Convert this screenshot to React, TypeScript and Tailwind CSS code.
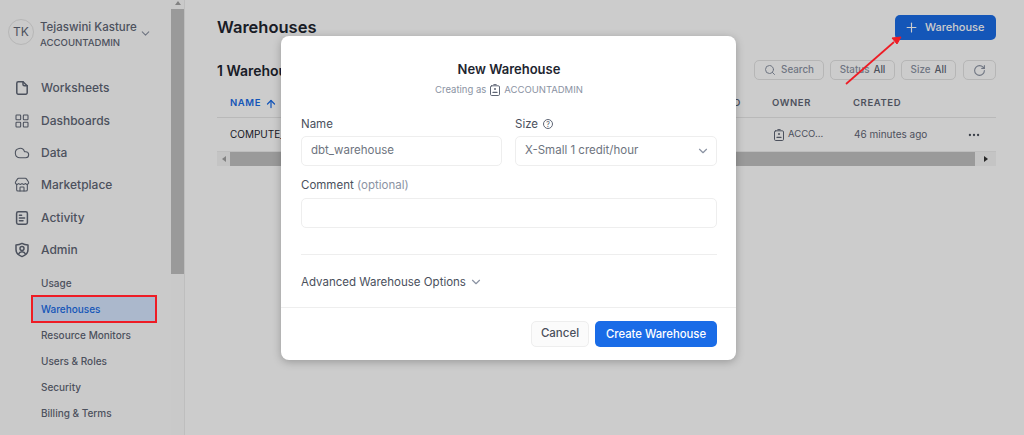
import React from 'react';
import { ArrowUp, ChevronDown, Cloud, LayoutGrid, MoreHorizontal, Plus, RotateCw, Search, Store } from 'lucide-react';

const FileIcon = () => (
  <svg width="16" height="16" viewBox="0 0 16 16" fill="none" stroke="currentColor" strokeWidth="1.5" strokeLinejoin="round" strokeLinecap="round">
    <path d="M9 1.8H4.2A1.4 1.4 0 0 0 2.8 3.2v9.6a1.4 1.4 0 0 0 1.4 1.4h7.6a1.4 1.4 0 0 0 1.4-1.4V5.8Z" />
    <path d="M9 1.8v2.6a1.4 1.4 0 0 0 1.4 1.4h2.8" />
  </svg>
);

const ActivityIcon = () => (
  <svg width="16" height="16" viewBox="0 0 16 16" fill="none" stroke="currentColor" strokeWidth="1.5" strokeLinecap="round">
    <rect x="2.6" y="1.8" width="10.8" height="12.4" rx="1.6" />
    <path d="M5.4 5.2h2.2M5.4 8h5.2M5.4 10.8h3.6" />
  </svg>
);

const AdminIcon = () => (
  <svg width="16" height="16" viewBox="0 0 16 16" fill="none" stroke="currentColor" strokeWidth="1.5" strokeLinejoin="round">
    <path d="M8 1.4c2 1.2 3.9 1.6 6 1.7v4.4c0 3.4-2.4 5.8-6 7.1-3.6-1.3-6-3.7-6-7.1V3.1c2.1-.1 4-.5 6-1.7Z" />
    <circle cx="8" cy="6.6" r="2" />
    <path d="M4.6 12c.6-1.5 1.9-2.3 3.4-2.3s2.8.8 3.4 2.3" />
  </svg>
);

const RoleIcon = ({ size = 12 }: { size?: number }) => (
  <svg width={size} height={size} viewBox="0 0 12 12" fill="none" stroke="currentColor" strokeWidth="1" strokeLinecap="round">
    <rect x="1.5" y="1.8" width="9" height="9.7" rx="1.2" />
    <path d="M4.8 .6h2.4" />
    <circle cx="6" cy="5" r="1" fill="currentColor" stroke="none" />
    <path d="M4 8.4h4" strokeWidth="1.2" />
  </svg>
);

const navItems = [
  { label: 'Worksheets', icon: <FileIcon /> },
  { label: 'Dashboards', icon: <LayoutGrid size={16} strokeWidth={1.6} /> },
  { label: 'Data', icon: <Cloud size={16} strokeWidth={1.6} /> },
  { label: 'Marketplace', icon: <Store size={16} strokeWidth={1.6} /> },
  { label: 'Activity', icon: <ActivityIcon /> },
  { label: 'Admin', icon: <AdminIcon /> },
];

const subItems = ['Usage', 'Warehouses', 'Resource Monitors', 'Users & Roles', 'Security', 'Billing & Terms'];

const Sidebar = () => (
  <aside className="flex w-[185px] shrink-0 border-r border-[#eeeeee] bg-[#fdfdfd]">
    <div className="w-[171px] shrink-0">
      <div className="flex h-[72px] items-start pl-2 pt-[19px]">
        <div className="flex h-[26px] w-[26px] shrink-0 items-center justify-center rounded-full border border-[#e4e4e4] text-[12px] text-[#5f6675]">
          TK
        </div>
        <div className="ml-[6px] flex w-[101px] flex-col">
          <span className="whitespace-nowrap text-[11.5px] font-medium leading-[16px] text-[#5f6675]">Tejaswini Kasture</span>
          <span className="whitespace-nowrap text-[9.6px] font-medium leading-[15px] text-[#5f6675]">ACCOUNTADMIN</span>
        </div>
        <ChevronDown size={13} className="mt-[8px] -ml-[2px] text-[#8b93a3]" />
      </div>
      <nav className="flex flex-col">
        {navItems.map(item => (
          <div key={item.label} className="flex h-[32.4px] items-center pl-[14px] text-[#5f6675]">
            <span className="flex w-[27px] shrink-0">{item.icon}</span>
            <span className="text-[12px] font-medium">{item.label}</span>
          </div>
        ))}
      </nav>
      <div className="mt-[4px] flex flex-col pl-[33px] pr-[16px]">
        {subItems.map(label => (
          <div
            key={label}
            className={`flex h-[26px] items-center whitespace-nowrap pl-[8px] text-[10px] font-medium ${
              label === 'Warehouses' ? 'bg-[#d6e6ff] text-[#1a6ce7]' : 'text-[#5f6675]'
            }`}
          >
            {label}
          </div>
        ))}
      </div>
    </div>
    <div className="flex w-[13px] shrink-0 flex-col bg-[#fcfcfc]">
      <div className="flex h-[9px] items-start justify-center pt-[1px]">
        <div className="h-0 w-0 border-x-[3px] border-b-[4px] border-x-transparent border-b-[#a3a3a3]" />
      </div>
      <div className="h-[265px] bg-[#c1c1c1]" />
    </div>
  </aside>
);

const ToolButton = ({ children, className = '' }: { children: React.ReactNode; className?: string }) => (
  <div className={`flex h-[20px] items-center justify-center gap-[4px] rounded-[5px] border border-[#e4e4e4] text-[9.8px] font-medium text-[#8b93a3] ${className}`}>
    {children}
  </div>
);

const Main = () => (
  <main className="flex min-w-0 flex-1 flex-col pl-[32px] pr-[28px] pt-[15px]">
    <div className="flex h-[25px] items-center justify-between">
      <h1 className="text-[16.5px] font-semibold text-[#1e252f]">Warehouses</h1>
      <div className="flex h-[25px] w-[101px] items-center gap-[6px] rounded-[5px] bg-[#1a6ce7] pl-[9px] text-[11px] font-medium text-white">
        <Plus size={15} strokeWidth={1.8} />
        Warehouse
      </div>
    </div>
    <div className="mt-[20px] flex h-[20px] items-center">
      <span className="text-[14px] font-semibold text-[#1e252f]">1 Warehouse</span>
      <div className="ml-auto flex gap-[6px]">
        <ToolButton className="w-[70px] gap-[5px] text-[#5f6675]">
          <Search size={12} />
          Search
        </ToolButton>
        <ToolButton className="w-[65px]">
          Status <span className="text-[#5f6675]">All</span>
        </ToolButton>
        <ToolButton className="w-[55px]">
          Size <span className="text-[#5f6675]">All</span>
        </ToolButton>
        <ToolButton className="ml-[1px] w-[33px] text-[#5f6675]">
          <RotateCw size={13} />
        </ToolButton>
      </div>
    </div>
    <div className="mt-[12px] grid h-[26px] grid-cols-[419px_92px_81px_1fr] items-center border-b border-[#e8e8e8] pb-[2px] pl-[13px] text-[9.5px] font-semibold tracking-[0.6px] text-[#5f6675]">
      <span className="flex items-center gap-[4px] text-[#1a6ce7]">
        NAME <ArrowUp size={12} strokeWidth={2.5} />
      </span>
      <span className="text-right">RESUMED</span>
      <span className="pl-[31px]">OWNER</span>
      <span className="col-start-4 pl-[31px]">CREATED</span>
    </div>
    <div className="grid h-[34px] grid-cols-[543px_81px_113px_1fr] items-center border-b border-[#eeeeee] pl-[13px] text-[9.5px] text-[#5f6675]">
      <span className="text-[10px] text-[#1e252f]">COMPUTE_WH</span>
      <span className="flex items-center gap-[3px]">
        <RoleIcon />
        ACCO...
      </span>
      <span className="whitespace-nowrap text-[10px]">46 minutes ago</span>
      <MoreHorizontal size={14} className="text-[#4a505c]" />
    </div>
    <div className="flex h-[14px] items-center bg-[#f5f5f5]">
      <div className="flex w-[13px] justify-center">
        <div className="h-0 w-0 border-y-[3px] border-r-[4px] border-y-transparent border-r-[#a3a3a3]" />
      </div>
      <div className="h-full flex-1 bg-[#c1c1c1]" />
      <div className="flex w-[21px] justify-center">
        <div className="h-0 w-0 border-y-[3px] border-l-[4px] border-y-transparent border-l-[#333333]" />
      </div>
    </div>
  </main>
);

const Field = ({ children, className = '' }: { children: React.ReactNode; className?: string }) => (
  <div className={`flex h-[30px] items-center rounded-[5px] border border-[#eeeeee] pl-[9px] pr-[6px] text-[11.5px] text-[#6e7480] ${className}`}>
    {children}
  </div>
);

const Modal = () => (
  <div className="absolute left-[281px] top-[36px] flex h-[324px] w-[455px] flex-col rounded-[8px] bg-white shadow-[0_2px_8px_rgba(0,0,0,0.25)]">
    <div className="flex flex-1 flex-col pl-[20px] pr-[19px] pt-[24px]">
      <h2 className="text-center text-[13px] font-semibold leading-[18px] text-[#1e252f]">New Warehouse</h2>
      <div className="mt-[5px] flex items-center justify-center gap-[3px] text-[9.5px] leading-[14px] text-[#8b93a3]">
        Creating as <span className="text-[#5f6675]"><RoleIcon /></span> ACCOUNTADMIN
      </div>
      <div className="mt-[17px] grid grid-cols-[201px_202px] gap-x-[13px]">
        <div>
          <div className="text-[11.5px] leading-[20px] text-[#4a505c]">Name</div>
          <Field className="mt-[2px]">dbt_warehouse</Field>
        </div>
        <div>
          <div className="flex items-center gap-[5px] text-[11.5px] leading-[20px] text-[#4a505c]">
            Size
            <span className="flex h-[10px] w-[10px] items-center justify-center rounded-full border border-[#5f6675] text-[7px] leading-none">?</span>
          </div>
          <Field className="mt-[2px] justify-between">
            X-Small 1 credit/hour
            <ChevronDown size={14} className="text-[#8b93a3]" />
          </Field>
        </div>
      </div>
      <div className="mt-[9px] text-[11.5px] leading-[20px] text-[#4a505c]">
        Comment <span className="text-[#8b93a3]">(optional)</span>
      </div>
      <Field className="mt-[3px]">{''}</Field>
      <div className="mt-[26px] border-t border-[#eeeeee]" />
      <div className="mt-[18px] flex items-center gap-[3px] text-[11.5px] leading-[18px] text-[#4a505c]">
        Advanced Warehouse Options
        <ChevronDown size={14} className="text-[#8b93a3]" />
      </div>
    </div>
    <div className="flex h-[53px] items-center justify-end gap-[6px] border-t border-[#eeeeee] px-[19px]">
      <div className="flex h-[26px] w-[58px] items-center justify-center rounded-[5px] border border-[#eeeeee] bg-[#fbfbfb] text-[11.5px] font-medium text-[#4a505c]">
        Cancel
      </div>
      <div className="flex h-[26px] w-[122px] items-center justify-center rounded-[5px] bg-[#1a6ce7] text-[11.3px] font-medium text-white">
        Create Warehouse
      </div>
    </div>
  </div>
);

const App = () => {
  return (
    <div className="relative flex h-[435px] w-[1024px] overflow-hidden bg-white font-['Inter',sans-serif]">
      <Sidebar />
      <Main />
      <div className="absolute inset-0 bg-black/20" />
      <Modal />
      <div className="absolute left-[31px] top-[295px] h-[28px] w-[126px] border-2 border-[#ee1c25]" />
      <svg className="absolute left-[840px] top-[30px]" width="70" height="60" viewBox="0 0 70 60" fill="none">
        <path d="M6 54 L54 12" stroke="#ee1c25" strokeWidth="1.7" />
        <path d="M61 7 L52 8 L57 14 Z" fill="#ee1c25" stroke="#ee1c25" />
      </svg>
    </div>
  );
};

export default App;
